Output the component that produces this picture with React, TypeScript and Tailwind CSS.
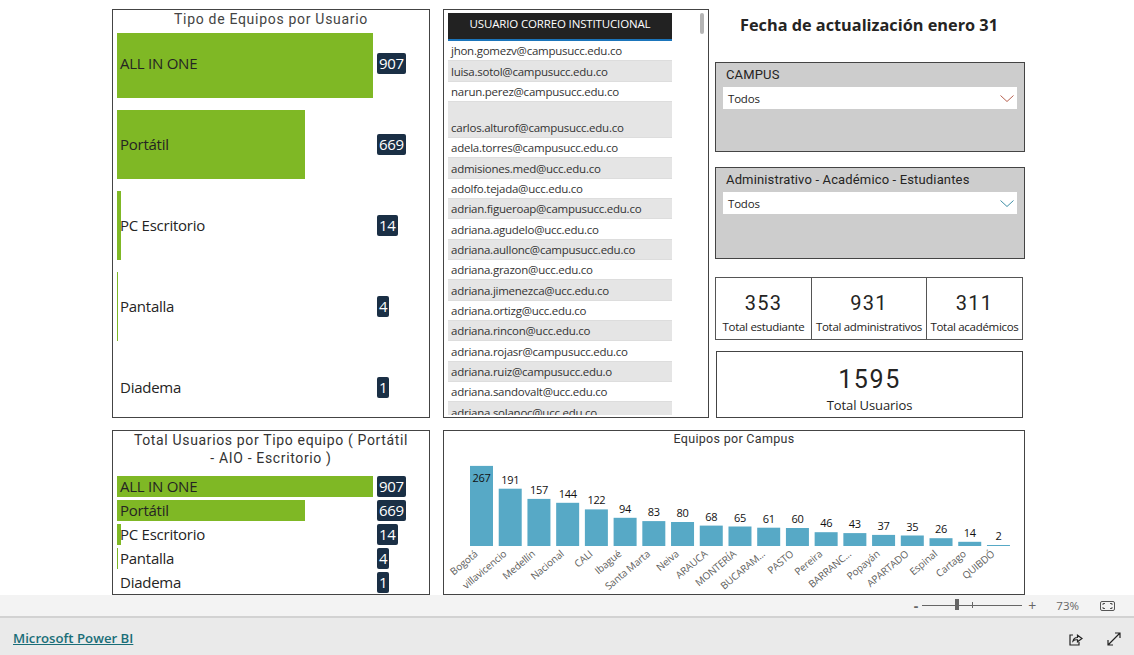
import React from "react";

const seg = { fontFamily: '"Open Sans", "Noto Sans", sans-serif' };
const din = { fontFamily: 'Roboto, "Liberation Sans", sans-serif' };

const types = [
  { name: "ALL IN ONE", value: 907, width: 256 },
  { name: "Portátil", value: 669, width: 188 },
  { name: "PC Escritorio", value: 14, width: 4 },
  { name: "Pantalla", value: 4, width: 1 },
  { name: "Diadema", value: 1, width: 0 },
];

const emails = [
  "jhon.gomezv@campusucc.edu.co",
  "luisa.sotol@campusucc.edu.co",
  "narun.perez@campusucc.edu.co",
  "carlos.alturof@campusucc.edu.co",
  "adela.torres@campusucc.edu.co",
  "admisiones.med@ucc.edu.co",
  "adolfo.tejada@ucc.edu.co",
  "adrian.figueroap@campusucc.edu.co",
  "adriana.agudelo@ucc.edu.co",
  "adriana.aullonc@campusucc.edu.co",
  "adriana.grazon@ucc.edu.co",
  "adriana.jimenezca@ucc.edu.co",
  "adriana.ortizg@ucc.edu.co",
  "adriana.rincon@ucc.edu.co",
  "adriana.rojasr@campusucc.edu.co",
  "adriana.ruiz@campusucc.edu.o",
  "adriana.sandovalt@ucc.edu.co",
  "adriana.solanoc@ucc.edu.co",
];

const campus: [string, number][] = [
  ["Bogotá", 267],
  ["villavicencio", 191],
  ["Medellín", 157],
  ["Nacional", 144],
  ["CALI", 122],
  ["Ibagué", 94],
  ["Santa Marta", 83],
  ["Neiva", 80],
  ["ARAUCA", 68],
  ["MONTERÍA", 65],
  ["BUCARAM...", 61],
  ["PASTO", 60],
  ["Pereira", 46],
  ["BARRANC...", 43],
  ["Popayán", 37],
  ["APARTADO", 35],
  ["Espinal", 26],
  ["Cartago", 14],
  ["QUIBDÓ", 2],
];

function Badge({ value }: { value: number }) {
  return (
    <span
      className="inline-flex h-[21px] items-center justify-center rounded-[2px] bg-[#1a2f45] px-[2px] text-[15px] font-medium tracking-[-0.3px] text-white"
      style={seg}
    >
      {value}
    </span>
  );
}

function TypeRow({ t, h, lift }: { t: (typeof types)[number]; h: string; lift?: boolean }) {
  return (
    <div className={`relative flex items-center ${h} ${lift ? "pb-[4px]" : ""}`}>
      {t.width > 0 && (
        <div className="absolute left-0 top-0 h-full bg-[#7fb825]" style={{ width: t.width }} />
      )}
      <span className="relative w-[260px] pl-[3px] text-[15px] leading-none tracking-[-0.25px] text-[#252423]" style={seg}>
        {t.name}
      </span>
      <Badge value={t.value} />
    </div>
  );
}

function Slicer({ title, h, color }: { title: string; h: string; color: string }) {
  return (
    <div className={`${h} border border-[#444] bg-[#cdcdcd] px-[7px] pt-[3px]`}>
      <div className="pl-[3px] text-[13px] leading-[18px] tracking-[0.15px] text-[#252423]" style={din}>
        {title}
      </div>
      <div className="mt-[3px] flex h-[22px] items-center justify-between bg-white pl-[5px] pr-[2px] pt-px text-[11.5px] tracking-[-0.2px] text-[#252423]" style={seg}>
        <span>Todos</span>
        <svg width="16" height="9" viewBox="0 0 16 9" fill="none" stroke={color} strokeWidth="1">
          <path d="M1.5 1.5 L8 7.5 L14.5 1.5" />
        </svg>
      </div>
    </div>
  );
}

function Kpi({ value, label, w, divider }: { value: number; label: string; w: string; divider?: boolean }) {
  return (
    <div className={`flex ${w} flex-col items-center ${divider ? "border-r border-[#555]" : ""}`}>
      <div className="mt-[11px] text-[20px] leading-[28px] tracking-[1.2px] text-[#252423]" style={din}>
        {value}
      </div>
      <div className="mt-[2px] whitespace-nowrap text-[11.5px] leading-[16px] tracking-[-0.3px] text-[#252423]" style={seg}>
        {label}
      </div>
    </div>
  );
}

function ColumnChart() {
  const base = 115;
  const scale = 0.3;
  const pitch = 28.72;
  return (
    <svg width="580" height="163" className="block">
      {campus.map(([name, v], i) => {
        const x = 26 + i * pitch;
        const h = Math.max(v * scale, 1);
        const top = base - h;
        const lx = x + 11.5;
        return (
          <g key={name}>
            <rect x={x} y={top} width={23} height={h} fill="#57a9c6" />
            <text
              x={lx}
              y={i === 0 ? top + 16 : top - 5}
              textAnchor="middle"
              fontSize="11"
              letterSpacing="-0.3"
              fill="#111"
              style={seg}
            >
              {v}
            </text>
            <text
              x={lx - 3}
              y={base + 9}
              textAnchor="end"
              fontSize="10"
              letterSpacing="-0.15"
              fill="#605e5c"
              transform={`rotate(-40 ${lx - 3} ${base + 9})`}
              style={seg}
            >
              {name}
            </text>
          </g>
        );
      })}
    </svg>
  );
}

export default function App() {
  return (
    <div className="flex h-[655px] w-[1134px] flex-col overflow-hidden bg-white">
      <main className="flex h-[595px] flex-col pl-[112px] pt-[9px]">
        <div className="flex h-[409px]">
          {/* Tipo de Equipos */}
          <section className="w-[318px] overflow-hidden border border-[#444] px-[4px]">
            <h2 className="h-[23px] pt-px text-center text-[14px] leading-[17px] tracking-[0.7px] text-[#444]" style={din}>
              Tipo de Equipos por Usuario
            </h2>
            <div className="flex flex-col gap-[12px]">
              {types.map((t, i) => (
                <TypeRow key={t.name} t={t} lift={i === 0} h={i === 0 ? "h-[65px] shrink-0" : "h-[69px] shrink-0"} />
              ))}
            </div>
          </section>

          {/* Tabla */}
          <section className="relative ml-[13px] w-[266px] border border-[#444] px-[4px] pt-[3px]">
            <div className="h-[402px] w-[224px] overflow-hidden">
              <div className="flex h-[28px] items-center justify-center border-b-2 border-[#1b75bb] bg-[#222] pb-[4px] text-[11.5px] tracking-[-0.15px] text-white" style={seg}>
                USUARIO CORREO INSTITUCIONAL
              </div>
              {emails.map((e, i) => (
                <div
                  key={e}
                  className={`flex items-end border-b border-[#ddd] pl-[3px] text-[11.5px] leading-[18px] tracking-[-0.25px] text-[#333] ${i % 2 ? "bg-[#e5e5e5]" : "bg-white"} ${i === 3 ? "h-[36px]" : "h-[20.33px]"}`}
                  style={seg}
                >
                  {e}
                </div>
              ))}
            </div>
            <div className="absolute right-[4px] top-[3px] h-[21px] w-[4px] rounded-[2px] bg-[#b5b5b5]" />
          </section>

          {/* Columna derecha */}
          <div className="ml-[6px] flex w-[310px] flex-col">
            <h1 className="mt-[5px] h-[48px] pl-[25px] text-[16.3px] leading-[22px] font-bold text-[#252423]" style={seg}>
              Fecha de actualización enero 31
            </h1>
            <Slicer title="CAMPUS" h="h-[90px]" color="#b8604f" />
            <div className="h-[15px]" />
            <Slicer title="Administrativo - Académico - Estudiantes" h="h-[92px]" color="#3f8fa6" />
            <div className="mt-[18px] flex h-[63px] w-[308px] border border-[#555]">
              <Kpi value={353} label="Total estudiante" w="w-[96px]" divider />
              <Kpi value={931} label="Total administrativos" w="w-[115px]" divider />
              <Kpi value={311} label="Total académicos" w="flex-1" />
            </div>
            <div className="ml-[1px] mt-[11px] flex h-[67px] w-[307px] flex-col items-center border border-[#444]">
              <div className="mt-[12px] text-[25px] leading-[32px] tracking-[1.6px] text-[#252423]" style={din}>
                1595
              </div>
              <div className="mt-0 text-[13px] leading-[18px] tracking-[-0.1px] text-[#252423]" style={seg}>
                Total Usuarios
              </div>
            </div>
          </div>
        </div>

        <div className="mt-[12px] flex h-[165px]">
          <section className="w-[318px] overflow-hidden border border-[#444] px-[4px]">
            <h2 className="mb-[9px] text-center text-[14px] leading-[18px] tracking-[0.65px] text-[#333]" style={din}>
              Total Usuarios por Tipo equipo ( Portátil
              <br />- AIO - Escritorio )
            </h2>
            <div className="flex flex-col gap-[3px]">
              {types.map((t) => (
                <TypeRow key={t.name} t={t} h="h-[21px]" />
              ))}
            </div>
          </section>
          <section className="ml-[13px] w-[582px] overflow-hidden border border-[#444]">
            <h2 className="h-0 text-center text-[12.5px] leading-[16px] tracking-[0.3px] text-[#333]" style={din}>
              Equipos por Campus
            </h2>
            <ColumnChart />
          </section>
        </div>
      </main>

      <div className="flex h-[23px] items-center justify-end border-b-2 border-[#d2d2d2] bg-[#f3f3f3] pr-[19px] text-[#666]">
        <span className="mr-[4px] text-[14px] leading-none font-bold" style={seg}>-</span>
        <div className="relative flex h-[13px] w-[100px] items-center">
          <div className="h-px w-full bg-[#666]" />
          <div className="absolute left-[33px] top-0 h-[11px] w-[4px] bg-[#666]" />
          <div className="absolute left-[50px] top-[3px] h-[6px] w-px bg-[#666]" />
        </div>
        <span className="ml-[6px] text-[14px] leading-none" style={seg}>+</span>
        <span className="ml-[20px] text-[11.5px]" style={seg}>73%</span>
        <svg className="ml-[21px]" width="15" height="12" viewBox="0 0 15 12" fill="none" stroke="#555">
          <rect x="0.5" y="1.5" width="14" height="9" rx="1.5" />
          <path d="M3 5 V3.5 H5 M10 3.5 H12 V5 M12 7 V8.5 H10 M5 8.5 H3 V7" />
        </svg>
      </div>
      <footer className="flex flex-1 items-center bg-[#eaeaea] pl-[13px] pr-[13px] pt-[5px]">
        <a className="text-[13.2px] font-semibold text-[#1a6e78] underline" style={seg}>
          Microsoft Power BI
        </a>
        <svg className="ml-auto" width="15" height="15" viewBox="0 0 15 15" fill="none" stroke="#222" strokeWidth="1.2">
          <path d="M5 3 H2 V13 H11 V10" />
          <path d="M5 9 C5.5 6.5 7.5 5.5 9.5 5.5 V3.2 L14 6.5 L9.5 9.8 V7.8 C7.5 7.6 6 8 5 9 Z" />
        </svg>
        <svg className="ml-[24px]" width="14" height="14" viewBox="0 0 14 14" fill="none" stroke="#222" strokeWidth="1.2">
          <path d="M1 13 L13 1 M8 1 H13 V6 M1 8 V13 H6" />
        </svg>
      </footer>
    </div>
  );
}
